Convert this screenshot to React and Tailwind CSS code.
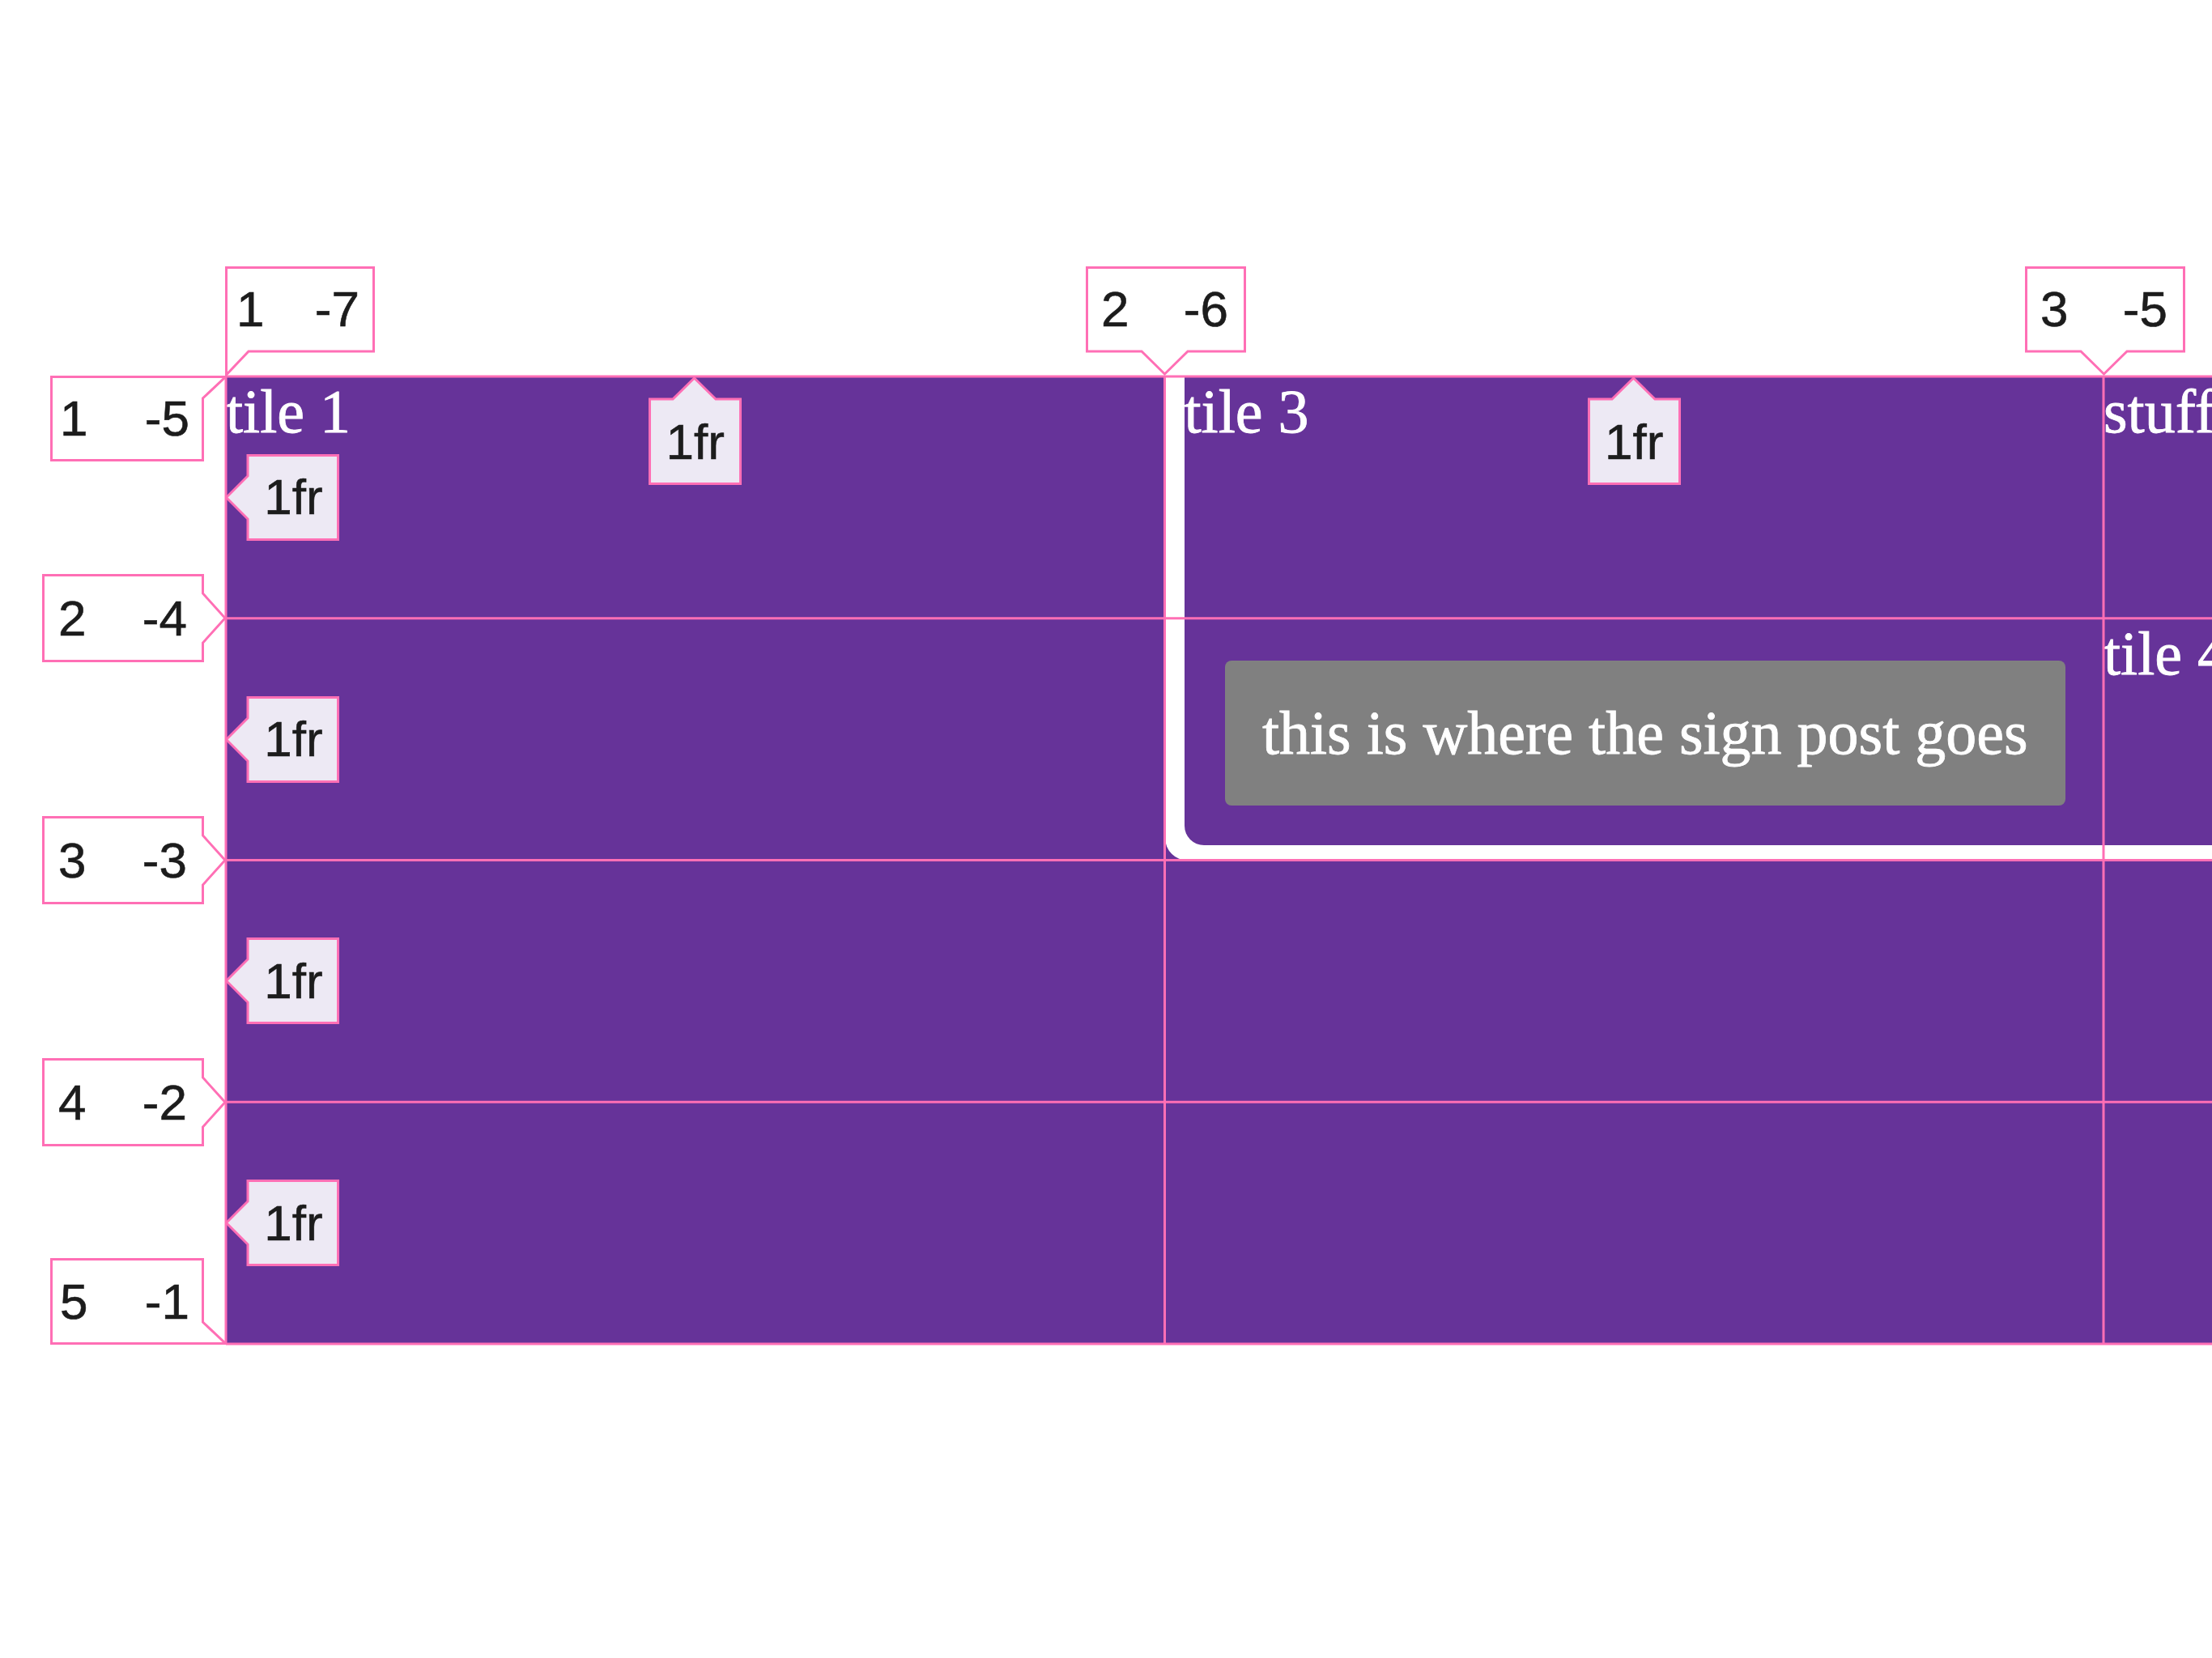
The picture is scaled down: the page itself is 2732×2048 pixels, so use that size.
import React from "react";

const PINK = "#ff6fb5";

function Outline({ w, h, pts, fill }) {
  return (
    <svg
      className="absolute inset-0"
      width={w}
      height={h}
      viewBox={`0 0 ${w} ${h}`}
    >
      <polygon points={pts} fill={fill} stroke={PINK} strokeWidth="3" />
    </svg>
  );
}

function Nums({ a, b, className }) {
  return (
    <div className={"relative flex items-center justify-between " + className}>
      <span>{a}</span>
      <span>{b}</span>
    </div>
  );
}

function TopTrack({ className }) {
  return (
    <div className={"relative w-[115px] h-[134px] row-start-1 self-start justify-self-center " + className}>
      <Outline
        w={115}
        h={134}
        fill="#ede9f4"
        pts="1.5,28 30,28 56.5,2 83,28 113.5,28 113.5,132.5 1.5,132.5"
      />
      <div className="relative mt-[28px] h-[105px] flex items-center justify-center">
        1fr
      </div>
    </div>
  );
}

function LeftTrack({ className }) {
  return (
    <div className={"relative col-start-1 w-[141px] h-[107px] self-center justify-self-start -ml-px " + className}>
      <Outline
        w={141}
        h={107}
        fill="#ede9f4"
        pts="28,1.5 139.5,1.5 139.5,105.5 28,105.5 28,80 1.5,53.5 28,27"
      />
      <div className="relative ml-[28px] w-[113px] h-full flex items-center justify-center">
        1fr
      </div>
    </div>
  );
}

function TopNum({ className, a, b }) {
  return (
    <div className={"absolute top-[329px] w-[198px] h-[136px] " + className}>
      <Outline
        w={198}
        h={136}
        fill="#ffffff"
        pts="1.5,1.5 196.5,1.5 196.5,105 126,105 97.5,133 69,105 1.5,105"
      />
      <Nums a={a} b={b} className="h-[106px] pl-[19px] pr-[22px]" />
    </div>
  );
}

function LeftNum({ className, a, b }) {
  return (
    <div className={"absolute left-[52px] w-[228px] h-[109px] " + className}>
      <Outline
        w={228}
        h={109}
        fill="#ffffff"
        pts="1.5,1.5 198.5,1.5 198.5,24 226,54.5 198.5,85 198.5,107.5 1.5,107.5"
      />
      <Nums a={a} b={b} className="w-[200px] h-full pl-[20px] pr-[21px]" />
    </div>
  );
}

export default function App() {
  const hLines = [3, 301.75, 600.5, 899.25, 1198];
  const vLines = [3, 1162.5, 2322];
  return (
    <div className="relative w-[2732px] h-[2048px] overflow-hidden bg-white">
      <div className="pl-[279px] pt-[465px]">
        <div className="relative w-max">
          <div className="grid grid-cols-[repeat(6,1159.5px)] grid-rows-[repeat(4,298.75px)] bg-[#663399] font-['Liberation_Serif',serif] text-[76px] leading-[normal] text-white whitespace-nowrap [-webkit-text-stroke:0.8px_white]">
            <div className="col-start-1 row-start-1 row-span-4">tile 1</div>
            <div className="col-start-2 col-span-5 row-start-1 row-span-2 bg-white rounded-bl-[28px] pl-[24px] pb-[19px]">
              <div className="h-full bg-[#663399] rounded-bl-[24px]">tile 3</div>
            </div>
            <div className="col-start-2 row-start-2 ml-[74px] mr-[47px] mt-[52px] mb-[68px] bg-[#808080] rounded-[8px] flex items-center justify-center">
              this is where the sign post goes
            </div>
            <div className="col-start-3 row-start-1">stuff</div>
            <div className="col-start-3 row-start-2">tile 4</div>
          </div>

          <svg
            className="absolute -left-[3px] -top-[3px] pointer-events-none"
            width="2456"
            height="1202"
          >
            {hLines.map((y) => (
              <line key={"h" + y} x1="3" x2="2456" y1={y} y2={y} stroke={PINK} strokeWidth="3" />
            ))}
            {vLines.map((x) => (
              <line key={"v" + x} x1={x} x2={x} y1="3" y2="1198" stroke={PINK} strokeWidth="3" />
            ))}
          </svg>

          <div className="absolute inset-0 grid grid-cols-[repeat(6,1159.5px)] grid-rows-[repeat(4,298.75px)] font-['Liberation_Sans',Arial,sans-serif] text-[62px] leading-none text-[#1c1c1c] [-webkit-text-stroke:0.6px_#1c1c1c] pointer-events-none">
            <TopTrack className="col-start-1" />
            <TopTrack className="col-start-2" />
            <LeftTrack className="row-start-1" />
            <LeftTrack className="row-start-2" />
            <LeftTrack className="row-start-3" />
            <LeftTrack className="row-start-4" />
          </div>
        </div>
      </div>

      <div className="font-['Liberation_Sans',Arial,sans-serif] text-[62px] leading-none text-[#1c1c1c] [-webkit-text-stroke:0.6px_#1c1c1c]">
        <div className="absolute left-[278px] top-[329px] w-[185px] h-[136px]">
          <Outline
            w={185}
            h={136}
            fill="#ffffff"
            pts="1.5,1.5 183.5,1.5 183.5,105 29,105 1.5,134"
          />
          <Nums a="1" b="-7" className="h-[106px] pl-[14px] pr-[19px]" />
        </div>
        <TopNum className="left-[1341px]" a="2" b="-6" />
        <TopNum className="left-[2501px]" a="3" b="-5" />

        <div className="absolute left-[62px] top-[464px] w-[218px] h-[106px]">
          <Outline
            w={218}
            h={106}
            fill="#ffffff"
            pts="1.5,1.5 216.5,1.5 188.5,28 188.5,104.5 1.5,104.5"
          />
          <Nums a="1" b="-5" className="w-[190px] h-full pl-[12px] pr-[18px]" />
        </div>
        <LeftNum className="top-[709px]" a="2" b="-4" />
        <LeftNum className="top-[1008px]" a="3" b="-3" />
        <LeftNum className="top-[1307px]" a="4" b="-2" />
        <div className="absolute left-[62px] top-[1554px] w-[218px] h-[107px]">
          <Outline
            w={218}
            h={107}
            fill="#ffffff"
            pts="1.5,1.5 188.5,1.5 188.5,79 216.5,105.5 1.5,105.5"
          />
          <Nums a="5" b="-1" className="w-[190px] h-full pl-[12px] pr-[18px]" />
        </div>
      </div>
    </div>
  );
}
